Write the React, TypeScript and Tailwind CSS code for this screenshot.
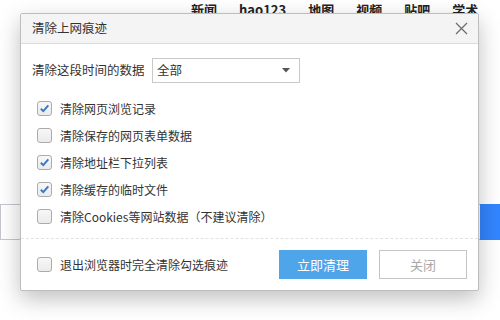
import React, { useState } from "react";

const FONT = { fontFamily: '"Microsoft YaHei", "Noto Sans CJK SC", "Liberation Sans", sans-serif' };

const NAV = ["新闻", "hao123", "地图", "视频", "贴吧", "学术", "更多"];

interface Option {
  id: string;
  label: string;
  checked: boolean;
}

const Checkbox: React.FC<{ checked: boolean; onToggle: () => void }> = ({ checked, onToggle }) => (
  <button
    onClick={onToggle}
    className="w-[15px] h-[15px] shrink-0 rounded-[3px] border border-[#ababab] bg-gradient-to-b from-[#f7f7f7] to-[#ebebeb] flex items-center justify-center"
  >
    {checked && (
      <svg width="11" height="11" viewBox="0 0 11 11">
        <path d="M1.8 5.8 L4.3 8.2 L9.3 2.4" fill="none" stroke="#3a78c3" strokeWidth="1.9" />
      </svg>
    )}
  </button>
);

export default function App() {
  const [options, setOptions] = useState<Option[]>([
    { id: "history", label: "清除网页浏览记录", checked: true },
    { id: "forms", label: "清除保存的网页表单数据", checked: false },
    { id: "address", label: "清除地址栏下拉列表", checked: true },
    { id: "cache", label: "清除缓存的临时文件", checked: true },
    { id: "cookies", label: "清除Cookies等网站数据（不建议清除）", checked: false },
  ]);
  const [onExit, setOnExit] = useState(false);

  const toggle = (id: string) =>
    setOptions((prev) => prev.map((o) => (o.id === id ? { ...o, checked: !o.checked } : o)));

  return (
    <div className="relative w-[500px] h-[320px] overflow-hidden bg-white" style={FONT}>
      {/* page behind the dialog */}
      <div className="flex items-start gap-[22px] pl-[191px] pt-[2px] text-[13px] font-bold text-[#222] leading-[16px] whitespace-nowrap">
        {NAV.map((n) => (
          <span key={n}>{n}</span>
        ))}
      </div>
      <div className="flex mt-[186px] h-[36px]">
        <div className="flex-1 border border-[#c4c7ce] border-r-0 bg-white" />
        <div className="w-[20px] bg-[#3385ff]" />
      </div>

      {/* dialog */}
      <div className="absolute left-[20px] top-[13px] w-[459px] h-[278px] bg-white border border-[#bdbdbd] rounded-[2px] shadow-[0_8px_22px_rgba(0,0,0,0.25)] flex flex-col text-[#333]">
        <div className="h-[30px] bg-[#f4f4f4] border-b border-[#dcdcdc] flex items-center justify-between pl-[11px] pr-[10px]">
          <span className="text-[12.5px]">清除上网痕迹</span>
          <svg width="13" height="13" viewBox="0 0 13 13">
            <path d="M1 1 L12 12 M12 1 L1 12" stroke="#6b6b6b" strokeWidth="1.2" />
          </svg>
        </div>

        <div className="flex items-center pl-[11px] pt-[14px]">
          <span className="text-[12.5px] w-[120px]">清除这段时间的数据</span>
          <div className="w-[148px] h-[25px] border border-[#c9c9c9] flex items-center justify-between pl-[4px] pr-[9px] text-[12.5px]">
            <span>全部</span>
            <svg width="8" height="5" viewBox="0 0 8 5">
              <path d="M0 0 L8 0 L4 4.5 Z" fill="#555" />
            </svg>
          </div>
        </div>

        <div className="flex flex-col pl-[16px] pt-[12px]">
          {options.map((o) => (
            <div key={o.id} className="h-[27px] flex items-center gap-[8px] text-[12px]">
              <Checkbox checked={o.checked} onToggle={() => toggle(o.id)} />
              <span>{o.label}</span>
            </div>
          ))}
        </div>

        <div className="mt-auto border-t border-dashed border-[#e2e2e2] h-[52px] flex items-center pl-[16px] pr-[11px]">
          <div className="flex items-center gap-[8px] text-[12px]">
            <Checkbox checked={onExit} onToggle={() => setOnExit(!onExit)} />
            <span>退出浏览器时完全清除勾选痕迹</span>
          </div>
          <div className="ml-auto flex gap-[12px]">
            <button className="w-[88px] h-[29px] bg-[#4ea5e9] text-white text-[13px]">立即清理</button>
            <button className="w-[88px] h-[29px] border border-[#c4c4c4] bg-white text-[#a8a8a8] text-[13px]">关闭</button>
          </div>
        </div>
      </div>
    </div>
  );
}
